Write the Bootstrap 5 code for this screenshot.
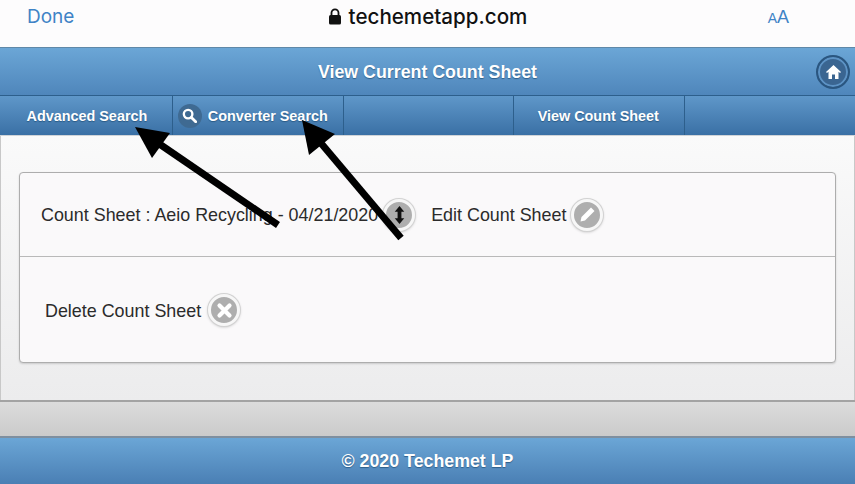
<!DOCTYPE html>
<html lang="en">
<head>
    <meta charset="UTF-8">
    <title>View Current Count Sheet</title>
    <link href="https://cdn.jsdelivr.net/npm/bootstrap@5.3.0/dist/css/bootstrap.min.css" rel="stylesheet">
    <style>
        html, body { height: 100%; }
        body {
            font-family: "Liberation Sans", Arial, sans-serif;
            background: #fff;
            overflow: hidden;
        }
        .shot { position: relative; width: 855px; height: 484px; }

        /* browser bar */
        .safari-bar { height: 47px; background: #fdfcfd; padding: 0 66px 13px 27px; }
        .safari-done { width: 159px; font-family: Inter, "Liberation Sans", sans-serif; font-size: 19px; color: #3f83c6; }
        .safari-url { font-family: Inter, "Liberation Sans", sans-serif; font-size: 20.6px; font-weight: 500; color: #111; gap: 7px; }
        .safari-aa { width: 120px; color: #3f83c6; font-family: "Liberation Sans", sans-serif; }
        .aa-small { font-size: 14px; }
        .aa-big { font-size: 18px; }

        /* blue bars */
        .bar-head {
            height: 49px;
            padding-top: 2px;
            position: relative;
            background: linear-gradient(#6ba6d6, #4f86bb);
            border-top: 1px solid #5f88a8;
            border-bottom: 1px solid #2d5f8c;
            color: #fff;
            font-weight: 700;
            font-size: 17.8px;
            text-shadow: 0 1px 1px #2f5f8a;
        }
        .home-btn {
            position: absolute; right: 5px; top: 7px;
            width: 34px; height: 34px; border-radius: 50%;
            background: #3a6591;
            border: 2px solid #2a5680;
            box-shadow: inset 0 0 0 2px #5d93c5;
        }
        .tab-row { height: 40px; background: linear-gradient(#5f97c9, #3a70a5); border-bottom: 1px solid #d0d4d8; }
        .tab-item {
            width: 171px; height: 39px;
            padding-top: 2px;
            border-left: 1px solid #2d5f8c;
            color: #fff;
            font-weight: 700;
            font-size: 14.4px;
            text-shadow: 0 1px 1px #2a5a85;
        }
        .tab-item:first-child { width: 172px; border-left: 0; padding-left: 2px; }
        .tab-search { padding-top: 0; padding-left: 5px; gap: 6px; }
        .tab-search span.tab-text { padding-top: 2px; }
        .tab-view { padding-right: 2px; }
        .search-dot { width: 24px; height: 24px; border-radius: 50%; background: #3f6a92; }

        /* content */
        .page-body {
            height: 264px;
            padding: 36px 18px 0;
            background: linear-gradient(#fafafa, #ececed);
            border-left: 1px solid #c8c8c8;
            border-right: 1px solid #c8c8c8;
        }
        .sheet-box {
            height: 191px;
            background: #faf9fa;
            border: 1px solid #adadad;
            border-radius: 4px;
            box-shadow: 0 1px 2px rgba(0,0,0,.15);
            color: #2b2b2b;
            font-size: 17.9px;
        }
        .sheet-row-a { height: 84px; border-bottom: 1px solid #b9b9b9; padding: 0 0 0 21px; }
        .sheet-row-b { padding: 37px 0 0 25px; }
        .row-label { padding-top: 2px; }
        .round-ico {
            width: 32px; height: 32px; border-radius: 50%;
            background: #aeaeae;
            border: 3px solid #f7f7f7;
            box-shadow: 0 0 0 1px #d2d2d2, 0 1px 3px rgba(0,0,0,.25);
        }
        .ms-ico { margin-left: 5px; }
        .ms-ico-wide { margin-left: 7px; }
        .edit-label { margin-left: 16px; }

        .grey-bar {
            height: 38px;
            background: linear-gradient(#dcdcdc, #cbcbcb);
            border-top: 2px solid #a3a3a3;
            border-bottom: 2px solid #7f8f9f;
        }
        .bar-foot {
            height: 46px;
            background: linear-gradient(#6ba6d6, #4a7fb4);
            color: #fff;
            font-weight: 700;
            font-size: 17.8px;
            text-shadow: 0 1px 1px #2f5f8a;
        }
        .arrow-layer { position: absolute; left: 0; top: 0; pointer-events: none; }
    </style>
</head>
<body>
<div class="shot">
    <div class="safari-bar d-flex align-items-center justify-content-between">
        <div class="safari-done">Done</div>
        <div class="safari-url d-flex align-items-center">
            <svg width="14" height="17" viewBox="0 0 14 17"><path d="M3.500 8V4.800a3.500 3.500 0 0 1 7 0V8" fill="none" stroke="#111" stroke-width="1.800"/><rect x="1" y="7" width="12" height="9.500" rx="1.600" fill="#111"/></svg>
            <span>techemetapp.com</span>
        </div>
        <div class="safari-aa text-end"><span class="aa-small">A</span><span class="aa-big">A</span></div>
    </div>

    <div class="bar-head d-flex align-items-center justify-content-center">
        View Current Count Sheet
        <div class="home-btn d-flex align-items-center justify-content-center">
            <svg width="15" height="14" viewBox="0 0 15 14"><path d="M7.500 0 0 7l1 1 1.500-1.300V14h3.500V9.500h3V14h3.500V6.700L14 8l1-1Z" fill="#fff"/></svg>
        </div>
    </div>

    <div class="tab-row d-flex">
        <div class="tab-item d-flex align-items-center justify-content-center">Advanced Search</div>
        <div class="tab-item tab-search d-flex align-items-center">
            <span class="search-dot d-flex align-items-center justify-content-center">
                <svg width="15" height="15" viewBox="0 0 14 14"><circle cx="5.700" cy="5.700" r="4" fill="none" stroke="#fff" stroke-width="2.200"/><path d="m8.800 8.800 4 4" stroke="#fff" stroke-width="2.600" stroke-linecap="round"/></svg>
            </span>
            <span class="tab-text">Converter Search</span>
        </div>
        <div class="tab-item"></div>
        <div class="tab-item tab-view d-flex align-items-center justify-content-center">View Count Sheet</div>
        <div class="tab-item"></div>
    </div>

    <div class="page-body">
        <div class="sheet-box">
            <div class="sheet-row-a d-flex align-items-center">
                <span class="row-label">Count Sheet : Aeio Recycling - 04/21/2020</span>
                <span class="round-ico ms-ico d-flex align-items-center justify-content-center">
                    <svg width="11" height="18" viewBox="0 0 10 17"><path d="M5 0 9.500 5.500H6.800v6h2.700L5 17 .5 11.500h2.700v-6H.5Z" fill="#111"/></svg>
                </span>
                <span class="row-label edit-label">Edit Count Sheet</span>
                <span class="round-ico ms-ico d-flex align-items-center justify-content-center">
                    <svg width="17" height="17" viewBox="0 0 17 17"><path d="M12 1.500 15.500 5 6 14.500 1.500 15.500 2.500 11Z" fill="#fff"/></svg>
                </span>
            </div>
            <div class="sheet-row-b d-flex align-items-center">
                <span class="row-label">Delete Count Sheet</span>
                <span class="round-ico ms-ico-wide d-flex align-items-center justify-content-center">
                    <svg width="17" height="17" viewBox="0 0 17 17"><path d="M3.500 3.500 13.500 13.500M13.500 3.500 3.500 13.500" stroke="#fff" stroke-width="4.200" stroke-linecap="round"/></svg>
                </span>
            </div>
        </div>
    </div>

    <div class="grey-bar"></div>
    <div class="bar-foot d-flex align-items-center justify-content-center">© 2020 Techemet LP</div>

    <!-- annotation arrows drawn on top of the shot -->
    <svg class="arrow-layer" width="855" height="484" viewBox="0 0 855 484">
        <path d="M278 225 158 143" stroke="#000" stroke-width="7" fill="none"/>
        <path d="M135 127 170 133 152 158Z" fill="#000"/>
        <path d="M401 238 320 142" stroke="#000" stroke-width="7" fill="none"/>
        <path d="M302 120 335 134 309 155Z" fill="#000"/>
    </svg>
</div>
<script src="https://cdn.jsdelivr.net/npm/bootstrap@5.3.0/dist/js/bootstrap.bundle.min.js"></script>
</body>
</html>
